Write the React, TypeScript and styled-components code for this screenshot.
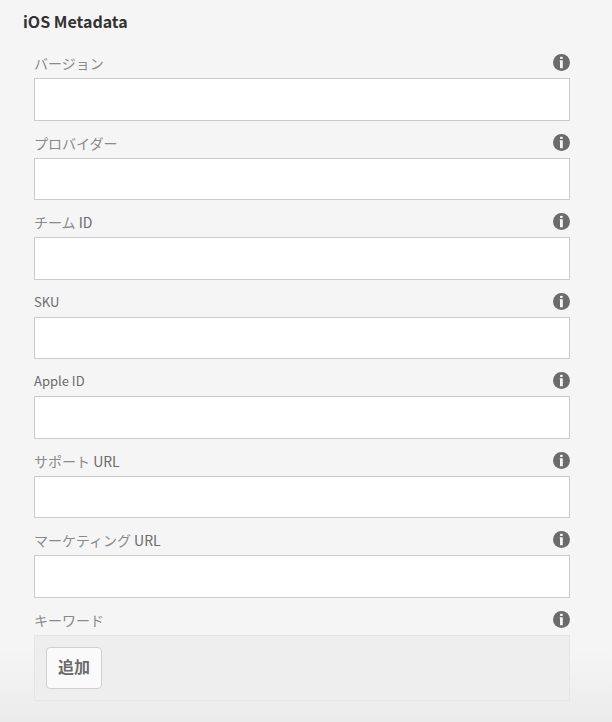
import React, { useId } from "react";
import styled, { createGlobalStyle } from "styled-components";

const GlobalStyle = createGlobalStyle`
  *, *::before, *::after { box-sizing: border-box; }
  body {
    margin: 0;
    background: #f5f5f5;
    color: #6b6b6b;
    font-family: "Noto Sans CJK JP", sans-serif;
    font-size: 14px;
  }
`;

const Page = styled.main`
  min-height: 100vh;
  padding: 7px 42px 21px 23px;
  background: linear-gradient(to top, #ebebeb 0, #f5f5f5 72px);
`;

const Title = styled.h1`
  margin: 0 0 6px;
  font-size: 16px;
  line-height: 28px;
  font-weight: 700;
  color: #323232;
`;

const Form = styled.form`
  padding-left: 11px;
`;

const LabelRow = styled.div`
  display: flex;
  align-items: center;
  justify-content: space-between;
  height: 37px;
  padding-top: 6px;
`;

const Label = styled.label<{ $small?: boolean }>`
  font-size: ${(p) => (p.$small ? 13 : 14)}px;
  line-height: 20px;
  color: #6b6b6b;
`;

const Kana = styled.span`
  color: #8a8a8a;
`;

const InfoButton = styled.button`
  display: flex;
  padding: 0;
  border: 0;
  background: none;
  cursor: pointer;
`;

const TextInput = styled.input`
  display: block;
  width: 100%;
  height: 43px;
  padding: 0 12px;
  border: 1px solid #cbcbcb;
  border-radius: 0;
  background: #fff;
  color: #323232;
  font: inherit;
`;

const Field = styled.div`
  &:nth-child(even) ${TextInput} {
    height: 42px;
  }
`;

const KeywordBox = styled.div`
  padding: 11px;
  border: 1px solid #e5e5e5;
  background: #eee;
`;

const AddButton = styled.button`
  display: block;
  height: 42px;
  padding: 0 11px 4px;
  border: 1px solid #cfcfcf;
  border-radius: 4px;
  background: #fafafa;
  color: #6b6b6b;
  font-family: inherit;
  font-size: 16px;
  font-weight: 700;
  line-height: 24px;
  cursor: pointer;
`;

function InfoIcon() {
  return (
    <svg width="17" height="17" viewBox="0 0 17 17" aria-hidden="true">
      <circle cx="8.5" cy="8.5" r="8.5" fill="#6b6b6b" />
      <rect x="7" y="2.8" width="2.8" height="2.2" rx="0.8" fill="#f5f5f5" />
      <path d="M6.7 6.3H9.8V14.2H7V7.2H6.7Z" fill="#f5f5f5" />
    </svg>
  );
}

function Info({ name }: { name: string }) {
  return (
    <InfoButton type="button" aria-label={name}>
      <InfoIcon />
    </InfoButton>
  );
}

interface FieldText {
  kana?: string;
  latin?: string;
}

const fields: FieldText[] = [
  { kana: "バージョン" },
  { kana: "プロバイダー" },
  { kana: "チーム", latin: "ID" },
  { latin: "SKU" },
  { latin: "Apple ID" },
  { kana: "サポート", latin: "URL" },
  { kana: "マーケティング", latin: "URL" },
];

function MetadataField({ kana, latin }: FieldText) {
  const id = useId();
  return (
    <Field>
      <LabelRow>
        <Label htmlFor={id} $small={!kana}>
          {kana && <Kana>{kana}</Kana>}
          {kana && latin && " "}
          {latin}
        </Label>
        <Info name={[kana, latin].filter(Boolean).join(" ")} />
      </LabelRow>
      <TextInput id={id} type="text" />
    </Field>
  );
}

export default function App() {
  return (
    <>
      <GlobalStyle />
      <Page lang="ja">
        <Title>iOS Metadata</Title>
        <Form onSubmit={(e) => e.preventDefault()}>
          {fields.map((f) => (
            <MetadataField key={(f.kana ?? "") + (f.latin ?? "")} {...f} />
          ))}
          <LabelRow>
            <Label htmlFor="add-keyword">
              <Kana>キーワード</Kana>
            </Label>
            <Info name="キーワード" />
          </LabelRow>
          <KeywordBox>
            <AddButton id="add-keyword" type="button" aria-label="追加">
              追加
            </AddButton>
          </KeywordBox>
        </Form>
      </Page>
    </>
  );
}
